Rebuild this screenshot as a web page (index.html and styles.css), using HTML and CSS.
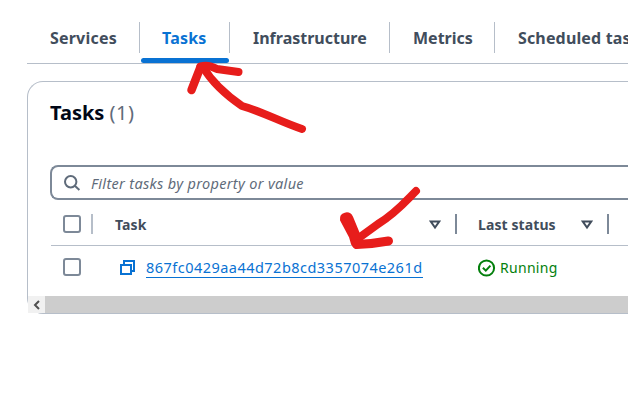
FILE: index.html
```html
<!DOCTYPE html>
<html lang="en">
<head>
<meta charset="utf-8">
<title>Tasks</title>
<link rel="stylesheet" href="styles.css">
</head>
<body>
<nav class="tabs">
  <a class="tab tab-services"><span>Services</span></a>
  <a class="tab tab-tasks active"><span>Tasks</span></a>
  <a class="tab tab-infra"><span>Infrastructure</span></a>
  <a class="tab tab-metrics"><span>Metrics</span></a>
  <a class="tab tab-scheduled"><span>Scheduled tasks</span></a>
</nav>
<main class="panel">
  <h1 class="title"><span class="name">Tasks</span><span class="count">(1)</span></h1>
  <div class="filter">
    <svg width="18" height="18" viewBox="0 0 18 18" fill="none" stroke="#5f6b7a" stroke-width="2"><circle cx="7.7" cy="7.7" r="5.7"/><path d="M11.8 11.8 16.4 16"/></svg>
    <span class="placeholder">Filter tasks by property or value</span>
  </div>
  <div class="table">
    <div class="row head">
      <div class="cell select"><i class="checkbox"></i></div>
      <div class="cell task"><span class="h-task">Task</span>
        <svg class="sort" width="12" height="10" viewBox="0 0 12 10" fill="none" stroke="#414d5c" stroke-width="2"><path d="M1.8 1.5h8.4L6 7.5Z"/></svg></div>
      <div class="cell status"><span class="h-status">Last status</span>
        <svg class="sort" width="12" height="10" viewBox="0 0 12 10" fill="none" stroke="#414d5c" stroke-width="2"><path d="M1.8 1.5h8.4L6 7.5Z"/></svg></div>
    </div>
    <div class="row data">
      <div class="cell select"><i class="checkbox"></i></div>
      <div class="cell task link-cell">
        <svg class="copy" width="16" height="16" viewBox="0 0 16 16" fill="none" stroke="#0972d3" stroke-width="2"><path d="M1 5h10v9H1Z"/><path d="M4 5V1h10v10h-3"/></svg>
        <a class="task-link">867fc0429aa44d72b8cd3357074e261d</a>
      </div>
      <div class="cell status">
        <svg class="ok" width="18" height="18" viewBox="0 0 18 18" fill="none" stroke="#037f0c" stroke-width="2"><circle cx="8.500" cy="9" r="7.6"/><path d="m4.9 8.800 2.900 2.800 4.600-5"/></svg>
        <span class="running">Running</span>
      </div>
    </div>
  </div>
  <div class="scrollbar">
    <span class="scroll-button"><svg width="8" height="10" viewBox="0 0 8 10" fill="none" stroke="#505050" stroke-width="2"><path d="M6 1 2 5l4 4"/></svg></span>
  </div>
</main>
<svg class="marks" width="628" height="401" viewBox="0 0 628 401" fill="none" stroke="#e71d1b" stroke-linecap="round" stroke-linejoin="round">
  <path stroke-width="8" d="M203 67C213 84 229 97 242 106C263 112 281 122 302 129"/>
  <path stroke-width="8.5" d="M191.500 90L200.500 67"/>
  <path stroke-width="8" d="M200.500 66.500Q208 64 217 69L238.500 72"/>
  <path stroke-width="8" d="M416 191C405 202 396 213 378 224L356 240"/>
  <path fill="#e71d1b" stroke-width="2" d="M341 220C340 213 349 211 352 217L359 234L362 241L356 248L352 244L350 237Z"/>
  <path stroke-width="9" d="M356.500 244.500Q372 244 388.500 241"/>
</svg>
</body>
</html>
```
FILE: styles.css
```css
* { box-sizing: border-box; }
body {
  margin: 0;
  width: 628px;
  height: 401px;
  overflow: hidden;
  position: relative;
  background: #fff;
  color: #414d5c;
  font: 14px/20px "Noto Sans", sans-serif;
}
span, a { white-space: nowrap; }
svg { flex: none; }
.tabs {
  display: flex;
  height: 64px;
  margin-left: 27px;
  padding-top: 22px;
  border-bottom: 1px solid #b6bec9;
  font-size: 16px;
  font-weight: 700;
}
.tab {
  flex: none;
  height: 31px;
  padding: 5px 0 0 23px;
  line-height: 22px;
  border-right: 1px solid #b6bec9;
  position: relative;
}
.tab-services { width: 113px; letter-spacing: 0.2px; }
.tab-tasks { width: 90px; padding-left: 22px; letter-spacing: 0.2px; }
.tab-infra { width: 160px; }
.tab-metrics { width: 105px; }
.tab-scheduled { width: 133px; border: 0; overflow: hidden; letter-spacing: 0.15px; }
.active { color: #0972d3; }
.active::after {
  content: "";
  position: absolute;
  left: 1px;
  top: 36px;
  width: 88px;
  height: 5px;
  border-radius: 3px;
  background: #0972d3;
}
.panel {
  height: 233px;
  margin: 17px 0 0 27px;
  border: 1px solid #b6bec9;
  border-right: 0;
  border-radius: 16px 0 0 16px;
}
.title {
  display: flex;
  gap: 5px;
  height: 83px;
  margin: 0;
  padding: 18px 0 0 22px;
  font-size: 20px;
  line-height: 26px;
  color: #000716;
}
.count { color: #5f6b7a; font-weight: 400; letter-spacing: 0.6px; }
.filter {
  display: flex;
  align-items: center;
  height: 35px;
  margin-left: 22px;
  padding-left: 11px;
  gap: 10px;
  border: 2px solid #7d8998;
  border-right: 0;
  border-radius: 8px 0 0 8px;
  color: #5f6b7a;
  font-style: italic;
}
.placeholder { font-size: 14.5px; letter-spacing: 0.33px; }
.table { height: 96px; margin-left: 23px; }
.row { display: flex; align-items: center; }
.head { height: 46px; padding-top: 3px; border-bottom: 1px solid #b6bec9; font-weight: 700; }
.data { height: 44px; }
.cell { flex: none; display: flex; align-items: center; height: 20px; }
.select { width: 42px; padding-left: 12px; }
.task { width: 364px; padding-left: 22px; }
.status { width: 152px; padding-left: 21px; }
.h-task, .h-status { position: relative; top: 1px; letter-spacing: 0.1px; }
.head .cell { border-right: 2px solid #7d8998; }
.head .select { border-color: #b6bec9; }
.sort { margin: 2px 14px 0 auto; }
.checkbox { width: 18px; height: 18px; border: 2px solid #7d8998; border-radius: 3px; }
.data .checkbox { margin-bottom: 2px; }
.link-cell { padding-left: 27px; }
.copy { margin-right: 10px; }
.task-link {
  color: #0972d3;
  border-bottom: 1px solid #0972d3;
  font-size: 14.5px;
  line-height: 19px;
  letter-spacing: 0.47px;
}
.ok { margin-right: 4px; }
.running { color: #037f0c; letter-spacing: 0.3px; }
.scrollbar { display: flex; height: 17px; background: #cdcdcd; }
.scroll-button { display: flex; align-items: center; justify-content: center; width: 17px; background: #f1f1f1; }
.marks { position: absolute; left: 0; top: 0; }
```
